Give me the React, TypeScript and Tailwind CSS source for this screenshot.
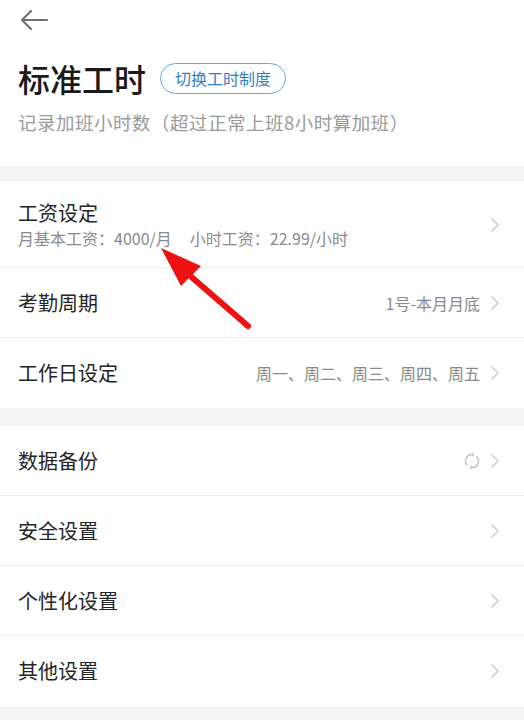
import React from "react";

const Chevron = () => (
  <svg width="10" height="16" viewBox="0 0 10 16" className="shrink-0">
    <path d="M2 2 L8 8 L2 14" fill="none" stroke="#c8c8c8" strokeWidth="1.4" strokeLinecap="round" strokeLinejoin="round" />
  </svg>
);

const Sync = () => (
  <svg width="18" height="18" viewBox="0 0 18 18" className="shrink-0">
    <path d="M9 2.5 A6.5 6.5 0 0 0 4.6 13.8" fill="none" stroke="#c4c4c4" strokeWidth="1.5" />
    <path d="M9 15.5 A6.5 6.5 0 0 0 13.4 4.2" fill="none" stroke="#c4c4c4" strokeWidth="1.5" />
    <path d="M9 1 L10.6 2.6 L9 4.2" fill="none" stroke="#c4c4c4" strokeWidth="1.3" />
    <path d="M9 17 L7.4 15.4 L9 13.8" fill="none" stroke="#c4c4c4" strokeWidth="1.3" />
  </svg>
);

function Row({ title, value, extra, last }: { title: string; value?: string; extra?: React.ReactNode; last?: boolean }) {
  return (
    <div className={`flex items-center h-[70px] pl-[18px] pr-[24px] ${last ? "" : "border-b border-[#efefef]"}`}>
      <div className="flex-1 text-[20px] text-[#262626]">{title}</div>
      {value && <div className="text-[16px] text-[#8a8a8a] mr-[10px]">{value}</div>}
      {extra && <div className="mr-[9px] flex items-center">{extra}</div>}
      <Chevron />
    </div>
  );
}

export default function App() {
  return (
    <div className="relative w-[524px] h-[720px] bg-white overflow-hidden" style={{ fontFamily: '"Noto Sans CJK SC", "Noto Sans", sans-serif' }}>
      <div className="h-[40px] flex items-center pl-[19px]">
        <svg width="30" height="22" viewBox="0 0 30 22">
          <path d="M28 11 H3 M12 2 L3 11 L12 20" fill="none" stroke="#707070" strokeWidth="2.2" strokeLinecap="round" strokeLinejoin="round" />
        </svg>
      </div>
      <div className="flex items-center pl-[18px] mt-[18px] h-[40px]">
        <div className="text-[32px] leading-none font-medium text-[#1a1a1a]">标准工时</div>
        <div className="ml-[14px] h-[31px] px-[14px] flex items-center rounded-full border border-[#6aa6d9] text-[16px] text-[#2f7fc7]">切换工时制度</div>
      </div>
      <div className="pl-[18px] mt-[10px] h-[30px] flex items-center text-[18.5px] tracking-[0.5px] text-[#9a9a9a]">记录加班小时数（超过正常上班8小时算加班）</div>
      <div className="h-[16px] mt-[28px] bg-[#f5f5f5]" />
      <div>
        <div className="flex items-center h-[86px] pl-[18px] pr-[24px] border-b border-[#efefef]">
          <div className="flex-1 flex flex-col">
            <div className="text-[20px] text-[#262626] leading-[27px]">工资设定</div>
            <div className="text-[16px] text-[#8a8a8a] leading-[24px]">
              月基本工资：4000/月<span className="ml-[18px]">小时工资：22.99/小时</span>
            </div>
          </div>
          <Chevron />
        </div>
        <Row title="考勤周期" value="1号-本月月底" />
        <Row title="工作日设定" value="周一、周二、周三、周四、周五" last />
      </div>
      <div className="h-[18px] bg-[#f5f5f5]" />
      <div>
        <Row title="数据备份" extra={<Sync />} />
        <Row title="安全设置" />
        <Row title="个性化设置" />
        <Row title="其他设置" last />
      </div>
      <div className="h-[14px] bg-[#f5f5f5]" />
      <svg className="absolute left-0 top-0 pointer-events-none" width="524" height="720" viewBox="0 0 524 720">
        <line x1="248" y1="326" x2="188" y2="274" stroke="#ee1111" strokeWidth="6" strokeLinecap="round" />
        <polygon points="161,248 201,266 181,286" fill="#ee1111" />
      </svg>
    </div>
  );
}
